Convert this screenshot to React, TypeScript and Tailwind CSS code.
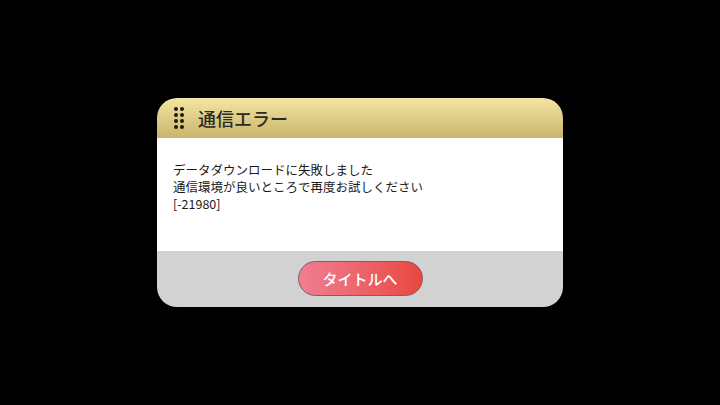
export default function App() {
  return (
    <div
      className="w-[720px] h-[405px] bg-black flex items-center justify-center"
      style={{ fontFamily: '"Noto Sans CJK JP", "Noto Sans", sans-serif' }}
    >
      <div className="w-[406px] h-[209px] mt-[-1px] rounded-[20px] overflow-hidden flex flex-col">
        {/* Header */}
        <div className="h-[40px] bg-gradient-to-b from-[#f4e6a2] to-[#c9b46c] flex items-center pl-[17px]">
          <div className="grid grid-cols-2 gap-x-[2px] gap-y-[2px]">
            {Array.from({ length: 8 }).map((_, i) => (
              <span key={i} className="w-[4px] h-[4px] rounded-full bg-[#1e1a10]" />
            ))}
          </div>
          <span className="ml-[14px] text-[18px] font-medium text-[#2c2a22] leading-none">通信エラー</span>
        </div>

        {/* Body */}
        <div className="h-[113px] bg-white px-[16px] pt-[23px] text-[12.5px] leading-[17px] text-[#1a1a1a]">
          <p className="h-[17px]">データダウンロードに失敗しました</p>
          <p className="h-[17px]">通信環境が良いところで再度お試しください</p>
          <p className="h-[17px]">[-21980]</p>
        </div>

        {/* Footer */}
        <div className="flex-1 bg-[#d2d2d2] flex items-center justify-center">
          <button className="w-[125px] h-[35px] rounded-full border border-[#8c5a5e] bg-gradient-to-r from-[#ef7e92] to-[#e8463f] text-white text-[15px] font-medium leading-none">
            タイトルへ
          </button>
        </div>
      </div>
    </div>
  );
}
